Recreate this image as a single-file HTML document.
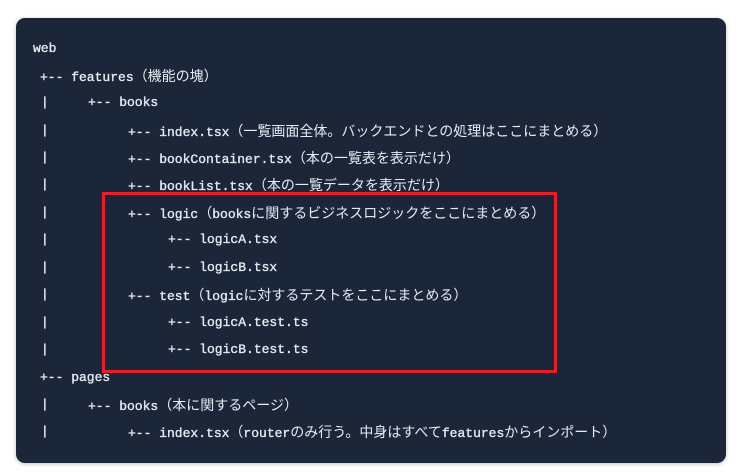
<!DOCTYPE html>
<html><head><meta charset="utf-8"><style>
html,body{margin:0;padding:0;background:#fff;width:743px;height:474px;overflow:hidden}
.panel{position:absolute;left:16px;top:18px;width:710px;height:445px;background:#1c2639;border-radius:9px;box-shadow:0 1px 4px rgba(0,0,0,.25)}
.l{position:absolute;white-space:pre;color:#e6ebf2;font-family:"Liberation Mono","Noto Sans CJK JP",monospace;font-size:13px;line-height:16px;-webkit-text-stroke:0.35px #e6ebf2}
.j{font-family:"Noto Sans CJK JP",sans-serif;font-size:14px;-webkit-text-stroke:0}
.j b{font-family:"Liberation Mono",monospace;font-size:13px;font-weight:normal;-webkit-text-stroke:0.35px #e6ebf2}
.b{position:absolute;color:#e6ebf2;font-family:"Liberation Mono",monospace;font-size:13px;line-height:16px;-webkit-text-stroke:0.35px #e6ebf2}
.box{position:absolute;left:102px;top:192px;width:449px;height:175px;border:3px solid #e5202a}
</style></head><body>
<div class="panel"></div>
<div class="l" style="left:33px;top:41px">web</div>
<div class="l" style="left:40px;top:68px">+-- features<span class="j">（機能の塊）</span></div>
<div class="b" style="left:41px;top:95px">|</div>
<div class="l" style="left:88px;top:95px">+-- books</div>
<div class="b" style="left:41px;top:123px">|</div>
<div class="l" style="left:128px;top:123px">+-- index.tsx<span class="j">（一覧画面全体。バックエンドとの処理はここにまとめる）</span></div>
<div class="b" style="left:41px;top:150px">|</div>
<div class="l" style="left:128px;top:150px">+-- bookContainer.tsx<span class="j">（本の一覧表を表示だけ）</span></div>
<div class="b" style="left:41px;top:177px">|</div>
<div class="l" style="left:128px;top:177px">+-- bookList.tsx<span class="j">（本の一覧データを表示だけ）</span></div>
<div class="b" style="left:41px;top:205px">|</div>
<div class="l" style="left:128px;top:205px">+-- logic<span class="j">（<b>books</b>に関するビジネスロジックをここにまとめる）</span></div>
<div class="b" style="left:41px;top:232px">|</div>
<div class="l" style="left:168px;top:232px">+-- logicA.tsx</div>
<div class="b" style="left:41px;top:260px">|</div>
<div class="l" style="left:168px;top:260px">+-- logicB.tsx</div>
<div class="b" style="left:41px;top:287px">|</div>
<div class="l" style="left:128px;top:287px">+-- test<span class="j">（<b>logic</b>に対するテストをここにまとめる）</span></div>
<div class="b" style="left:41px;top:315px">|</div>
<div class="l" style="left:168px;top:315px">+-- logicA.test.ts</div>
<div class="b" style="left:41px;top:342px">|</div>
<div class="l" style="left:168px;top:342px">+-- logicB.test.ts</div>
<div class="l" style="left:40px;top:370px">+-- pages</div>
<div class="b" style="left:41px;top:397px">|</div>
<div class="l" style="left:88px;top:397px">+-- books<span class="j">（本に関するページ）</span></div>
<div class="b" style="left:41px;top:424px">|</div>
<div class="l" style="left:128px;top:424px">+-- index.tsx<span class="j">（<b>router</b>のみ行う。中身はすべて<b>features</b>からインポート）</span></div>
<div class="box"></div>
</body></html>
